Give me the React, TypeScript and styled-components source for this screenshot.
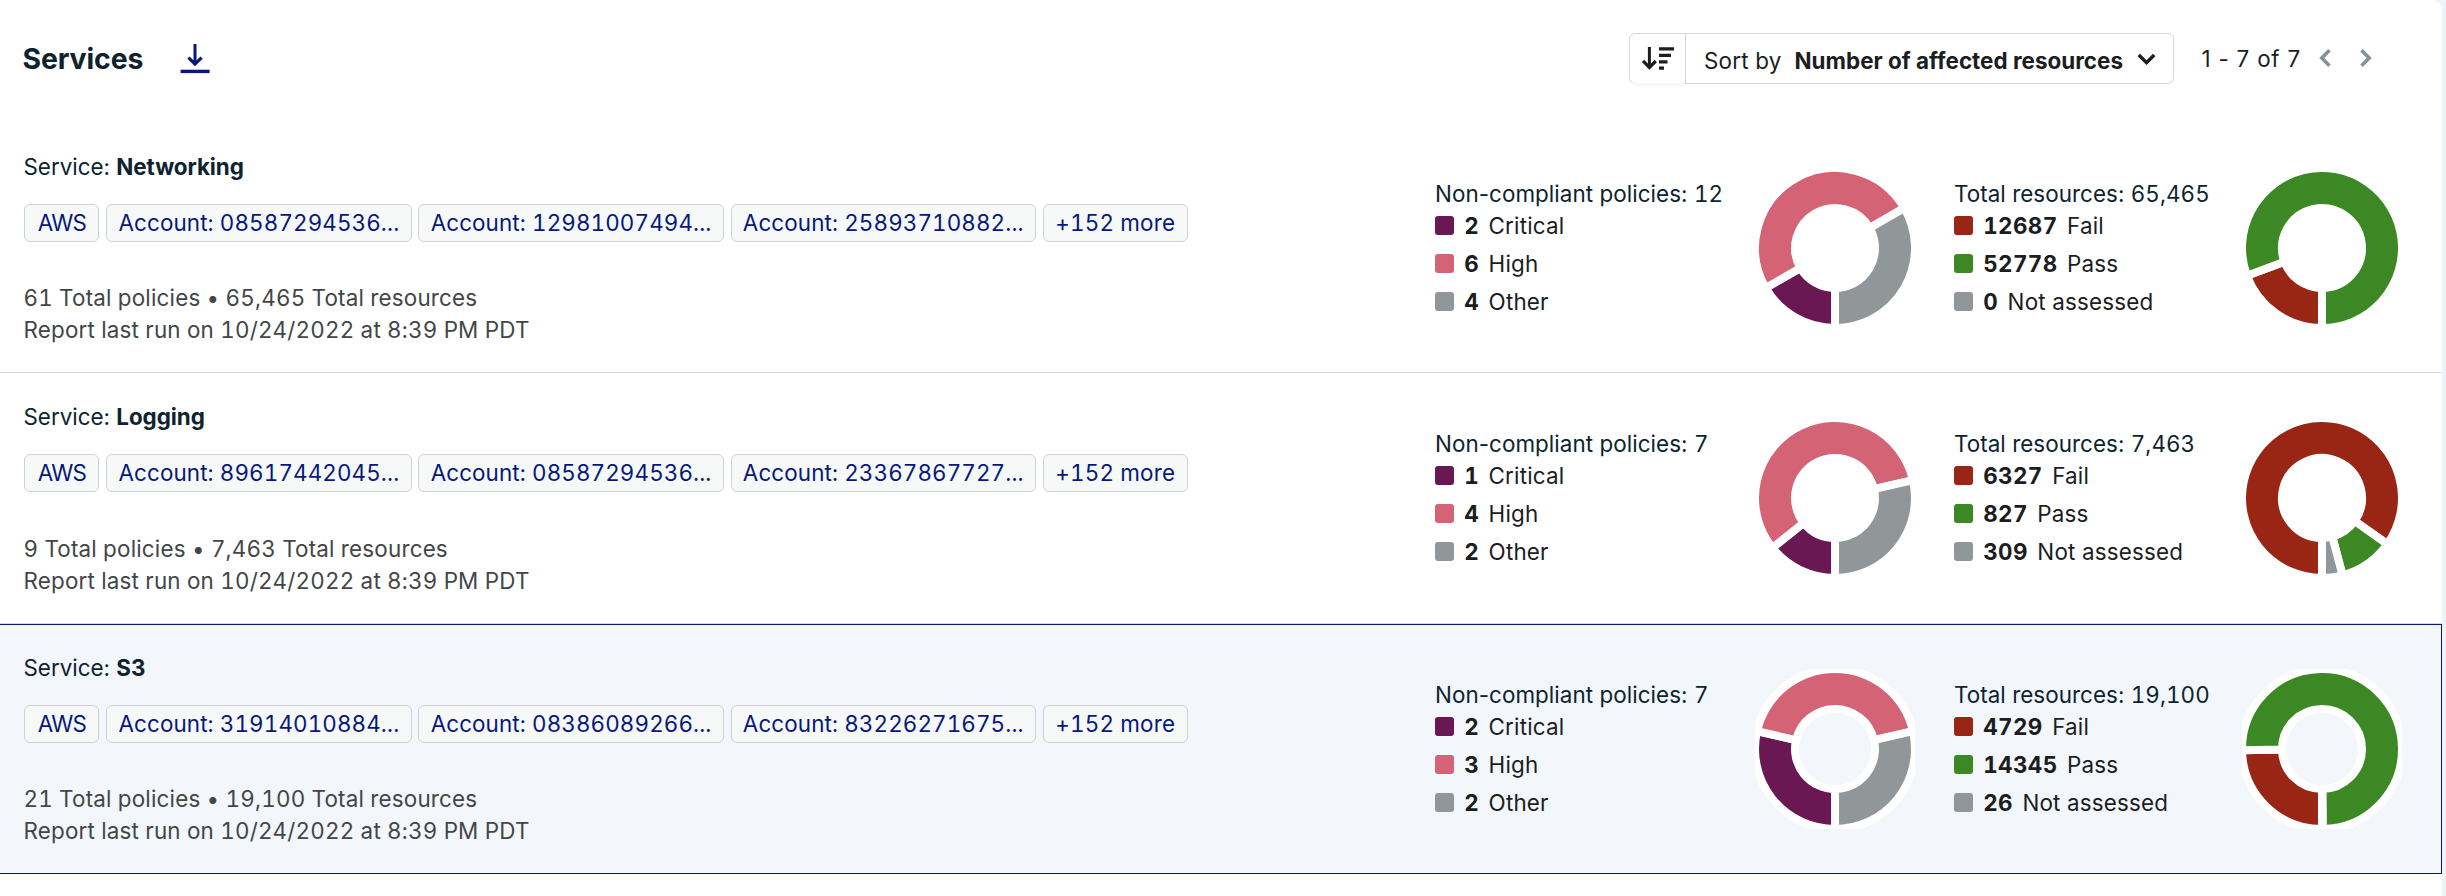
import React from 'react';
import styled, { createGlobalStyle } from 'styled-components';

const GlobalStyle = createGlobalStyle`
  body {
    margin: 0;
    background: #eff3f8;
    font-family: Inter, 'Liberation Sans', sans-serif;
    font-size: 22.4px;
    color: #1b1d1f;
  }
`;

const Panel = styled.main`
  box-sizing: border-box;
  width: 2442px;
  height: 896px;
  background: #fff;
  border-top-right-radius: 10px;
  overflow: hidden;
`;

const Header = styled.header`
  box-sizing: border-box;
  display: flex;
  align-items: flex-start;
  height: 123px;
  padding: 33px 69px 0 22.4px;
`;

const Title = styled.h1`
  margin: 0;
  font-size: 28.4px;
  font-weight: 650;
  line-height: 51px;
  letter-spacing: -0.1px;
  color: #0d2430;
`;

const DownloadButton = styled.button`
  display: flex;
  margin: 9px auto 0 34.5px;
  padding: 0;
  border: 0;
  background: none;
  color: #06187d;
`;

const SortControl = styled.div`
  box-sizing: border-box;
  display: flex;
  width: 545px;
  height: 51px;
  border: 1px solid #d3d6d8;
  border-radius: 6px;
`;

const SortDirection = styled.button`
  box-sizing: border-box;
  display: flex;
  align-items: center;
  width: 56px;
  padding: 0 0 0 12px;
  border: 0;
  border-right: 1px solid #d3d6d8;
  border-radius: 5px 0 0 5px;
  background: none;
  box-shadow: 0 4px 3px -1px #f6f6f6;
  color: #1b1d1f;
`;

const SortSelect = styled.button`
  display: flex;
  flex: 1;
  align-items: center;
  padding: 4px 17px 0 18px;
  border: 0;
  background: none;
  font: inherit;
  letter-spacing: 0.2px;
  color: #1b1d1f;
  white-space: nowrap;

  strong {
    margin-left: 13px;
    font-weight: 650;
    letter-spacing: 0.03px;
  }

  svg {
    margin: -2px 0 0 auto;
  }
`;

const Range = styled.span`
  width: 116.5px;
  margin-left: 27.5px;
  line-height: 51px;
  letter-spacing: 0.78px;
  white-space: nowrap;
`;

const PageButton = styled.button`
  display: flex;
  padding: 0;
  margin-top: 14px;
  border: 0;
  background: none;
  color: #86929a;

  & + & {
    margin-left: 27px;
  }
`;

const Row = styled.section<{ $tall?: boolean; $selected?: boolean }>`
  box-sizing: border-box;
  display: flex;
  align-items: flex-start;
  height: ${(p) => (p.$tall ? 251 : 250)}px;
  padding: 0 40px 0 23.5px;
  ${(p) =>
    p.$selected
      ? `background: #f3f6fb;
         box-shadow: inset 0 1px #06187d, inset 0 -1px #06187d, inset -1px 0 #06187d;`
      : 'border-bottom: 1px solid #d6d8da;'}
`;

const Details = styled.div`
  width: 1411.5px;
  padding-top: 28px;
`;

const ServiceName = styled.div`
  line-height: 32px;
  color: #0d2430;

  strong {
    font-weight: 650;
    letter-spacing: -0.06px;
  }
`;

const Tags = styled.div`
  display: flex;
  gap: 6.8px;
  margin: 21px 0 0 0.9px;
`;

const Tag = styled.span<{ $width: number; $spacing: number }>`
  box-sizing: border-box;
  width: ${(p) => p.$width}px;
  height: 38px;
  border: 1px solid #cfd2d4;
  border-radius: 6px;
  background: #f7f9f9;
  color: #06187d;
  font-feature-settings: 'tnum';
  letter-spacing: ${(p) => p.$spacing}px;
  line-height: 36px;
  text-align: center;
  white-space: nowrap;
`;

const Summary = styled.div<{ $tall?: boolean }>`
  margin-top: ${(p) => (p.$tall ? 41 : 40)}px;
  line-height: 32px;
  color: #434648;
  font-feature-settings: 'tnum';
  letter-spacing: 0.19px;
`;

const Legend = styled.div<{ $width: number }>`
  width: ${(p) => p.$width}px;
  padding-top: 57.5px;
`;

const LegendTitle = styled.div<{ $spacing: number }>`
  padding-bottom: 1px;
  line-height: 25px;
  color: #0d2430;
  letter-spacing: ${(p) => p.$spacing}px;
  white-space: nowrap;
`;

const Figure = styled.span`
  font-feature-settings: 'tnum';
`;

const LegendItem = styled.div`
  display: flex;
  align-items: center;
  height: 38.2px;
  letter-spacing: 0.18px;

  strong {
    margin: 0 9.5px 0 10.2px;
    font-weight: 650;
    font-feature-settings: 'tnum';
    letter-spacing: 0.4px;
  }
`;

const Swatch = styled.span<{ $color: string }>`
  width: 19px;
  height: 19px;
  border-radius: 3px;
  background: ${(p) => p.$color};
`;

const Chart = styled.svg`
  display: block;
  width: 160px;
  height: 160px;
  margin: 45px 39px 0 0;

  &:last-child {
    margin-right: 0;
  }
`;

type Slice = { label: string; value: number; color: string };

const OUTER = 80;
const INNER = 40;

const point = (radius: number, turn: number) => {
  const a = turn * Math.PI * 2;
  return `${(80 - radius * Math.sin(a)).toFixed(3)} ${(80 + radius * Math.cos(a)).toFixed(3)}`;
};

/* Slices run clockwise from six o'clock. */
function Donut({ slices }: { slices: Slice[] }) {
  const total = slices.reduce((sum, s) => sum + s.value, 0);
  let from = 0;
  return (
    <Chart viewBox="0 0 160 160">
      {slices
        .filter((s) => s.value > 0)
        .map((s) => {
          const start = from;
          const end = start + s.value / total;
          from = end;
          const large = end - start > 0.5 ? 1 : 0;
          return (
            <path
              key={s.label}
              d={`M${point(OUTER, start)}A${OUTER} ${OUTER} 0 ${large} 1 ${point(OUTER, end)}L${point(INNER, end)}A${INNER} ${INNER} 0 ${large} 0 ${point(INNER, start)}Z`}
              fill={s.color}
              stroke="#fff"
              strokeWidth="8"
            />
          );
        })}
    </Chart>
  );
}

type MetricProps = { title: string; figure: string | number; width: number; spacing: number; slices: Slice[] };

function Metric({ title, figure, width, spacing, slices }: MetricProps) {
  return (
    <>
      <Legend $width={width}>
        <LegendTitle $spacing={spacing}>
          {title}: <Figure>{figure}</Figure>
        </LegendTitle>
        {slices.map((s) => (
          <LegendItem key={s.label}>
            <Swatch $color={s.color} />
            <strong>{s.value}</strong>
            {s.label}
          </LegendItem>
        ))}
      </Legend>
      <Donut slices={slices} />
    </>
  );
}

const policySlices = (critical: number, high: number, other: number): Slice[] => [
  { label: 'Critical', value: critical, color: '#691853' },
  { label: 'High', value: high, color: '#d46375' },
  { label: 'Other', value: other, color: '#919699' },
];

const resourceSlices = (fail: number, pass: number, rest: number): Slice[] => [
  { label: 'Fail', value: fail, color: '#992614' },
  { label: 'Pass', value: pass, color: '#3c8825' },
  { label: 'Not assessed', value: rest, color: '#919699' },
];

const services = [
  {
    name: 'Networking',
    accounts: ['08587294536', '12981007494', '25893710882'],
    policies: 61,
    resources: '65,465',
    failing: 12,
    policySlices: policySlices(2, 6, 4),
    resourceSlices: resourceSlices(12687, 52778, 0),
  },
  {
    name: 'Logging',
    accounts: ['89617442045', '08587294536', '23367867727'],
    policies: 9,
    resources: '7,463',
    failing: 7,
    policySlices: policySlices(1, 4, 2),
    resourceSlices: resourceSlices(6327, 827, 309),
  },
  {
    name: 'S3',
    accounts: ['31914010884', '08386089266', '83226271675'],
    policies: 21,
    resources: '19,100',
    failing: 7,
    policySlices: policySlices(2, 3, 2),
    resourceSlices: resourceSlices(4729, 14345, 26),
  },
];

export default function App() {
  return (
    <>
      <GlobalStyle />
      <Panel>
        <Header>
          <Title>Services</Title>
          <DownloadButton aria-label="Download">
            <svg width="34" height="34" viewBox="0 0 34 34" fill="none" stroke="currentColor">
              <path d="M17 2v20" strokeWidth="3" />
              <path d="M10.4 15.6l6.6 6.4 6.6-6.4" strokeWidth="3.2" />
              <path d="M2.6 29.4h29" strokeWidth="3.4" />
            </svg>
          </DownloadButton>
          <SortControl>
            <SortDirection aria-label="Sort direction">
              <svg width="34" height="25" viewBox="0 0 34 25" fill="none" stroke="currentColor">
                <path d="M7.4 1v21" strokeWidth="3" />
                <path d="M1 15l6.4 6.4 6.4-6.4" strokeWidth="3.2" />
                <path d="M17 2.8h15M17 9.3h12M17 15.8h8.5M17 22.2h5" strokeWidth="3.2" />
              </svg>
            </SortDirection>
            <SortSelect>
              Sort by <strong>Number of affected resources</strong>
              <svg width="19" height="13" viewBox="0 0 19 13" fill="none" stroke="currentColor" strokeWidth="3.4">
                <path d="M1.8 2l7.7 7.7L17.2 2" />
              </svg>
            </SortSelect>
          </SortControl>
          <Range>1 - 7 of 7</Range>
          <PageButton aria-label="Previous page">
            <svg width="14" height="22" viewBox="0 0 14 22" fill="none" stroke="currentColor" strokeWidth="3.6">
              <path d="M11.5 3.2L3.8 11l7.7 7.8" />
            </svg>
          </PageButton>
          <PageButton aria-label="Next page">
            <svg width="14" height="22" viewBox="0 0 14 22" fill="none" stroke="currentColor" strokeWidth="3.6">
              <path d="M2.5 3.2l7.7 7.8-7.7 7.8" />
            </svg>
          </PageButton>
        </Header>
        {services.map((s, i) => (
          <Row key={s.name} $tall={i === 1} $selected={i === 2}>
            <Details>
              <ServiceName>
                Service: <strong>{s.name}</strong>
              </ServiceName>
              <Tags>
                <Tag $width={75} $spacing={-0.8}>AWS</Tag>
                {s.accounts.map((a) => (
                  <Tag key={a} $width={305.4} $spacing={0.12}>{`Account: ${a}...`}</Tag>
                ))}
                <Tag $width={145} $spacing={0.2}>+152 more</Tag>
              </Tags>
              <Summary $tall={i === 1}>
                <div>{`${s.policies} Total policies • ${s.resources} Total resources`}</div>
                <div>Report last run on 10/24/2022 at 8:39 PM PDT</div>
              </Summary>
            </Details>
            <Metric title="Non-compliant policies" figure={s.failing} width={320} spacing={0.06} slices={s.policySlices} />
            <Metric title="Total resources" figure={s.resources} width={288} spacing={0.05} slices={s.resourceSlices} />
          </Row>
        ))}
      </Panel>
    </>
  );
}
